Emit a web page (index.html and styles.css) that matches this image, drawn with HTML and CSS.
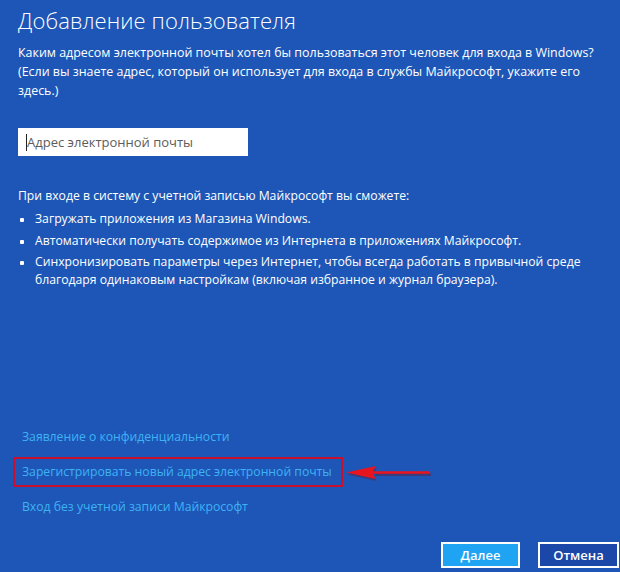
FILE: index.html
```html
<!DOCTYPE html>
<html lang="ru">
<head>
    <meta charset="UTF-8">
    <title>Добавление пользователя</title>
    <link rel="stylesheet" href="styles.css">
</head>
<body>
    <div class="dialog">
        <h1 class="title">Добавление пользователя</h1>
        <p class="intro">Каким адресом электронной почты хотел бы пользоваться этот человек для входа в Windows?<br>(Если вы знаете адрес, который он использует для входа в службы Майкрософт, укажите его<br>здесь.)</p>

        <div class="email-field">
            <span class="caret"></span>
            <span class="placeholder">Адрес электронной почты</span>
        </div>

        <p class="benefits-lead">При входе в систему с учетной записью Майкрософт вы сможете:</p>
        <ul class="benefits">
            <li>Загружать приложения из Магазина Windows.</li>
            <li>Автоматически получать содержимое из Интернета в приложениях Майкрософт.</li>
            <li>Синхронизировать параметры через Интернет, чтобы всегда работать в привычной среде благодаря одинаковым настройкам (включая избранное и журнал браузера).</li>
        </ul>

        <div class="links">
            <a class="link" href="#">Заявление о конфиденциальности</a>
            <div class="link-row">
                <a class="link marked" href="#">Зарегистрировать новый адрес электронной почты</a>
                <svg class="arrow" width="92" height="20" viewBox="0 0 92 20">
                    <path d="M30 10.5 H86" stroke="#7a0a12" stroke-width="3" opacity="0.35" transform="translate(1 2)"/>
                    <path d="M2 10.5 L32 4 L28 10.5 L32 17 Z" fill="#7a0a12" opacity="0.35" transform="translate(1 2)"/>
                    <path d="M28 10.5 H86" stroke="#e8141e" stroke-width="2.5"/>
                    <path d="M2 10.5 L32 4 L28 10.5 L32 17 Z" fill="#e8141e"/>
                </svg>
            </div>
            <a class="link" href="#">Вход без учетной записи Майкрософт</a>
        </div>

        <div class="actions">
            <button class="btn primary">Далее</button>
            <button class="btn">Отмена</button>
        </div>
    </div>
</body>
</html>
```

FILE: styles.css
```css
* {
    margin: 0;
    padding: 0;
    box-sizing: border-box;
}

body {
    background: #1d56b6;
    font-family: 'Open Sans', 'DejaVu Sans', sans-serif;
    color: #ffffff;
    width: 620px;
    height: 572px;
    overflow: hidden;
}

.dialog {
    height: 572px;
    padding: 5px 1px 4px 18px;
    display: flex;
    flex-direction: column;
}

.title {
    font-weight: 300;
    font-size: 22px;
    line-height: 30px;
    letter-spacing: 0.1px;
}

.intro {
    margin-top: 8px;
    font-size: 12.45px;
    line-height: 19px;
    white-space: nowrap;
}

.email-field {
    margin-top: 28px;
    width: 230px;
    height: 28px;
    background: #ffffff;
    display: flex;
    align-items: center;
    padding-left: 8px;
}

.caret {
    width: 1px;
    height: 17px;
    background: #222;
}

.placeholder {
    color: #5c5c5c;
    font-size: 13px;
}

.benefits-lead {
    margin-top: 31px;
    font-size: 12.2px;
    line-height: 18px;
}

.benefits {
    list-style: none;
    margin-top: 5px;
    width: 600px;
}

.benefits li {
    position: relative;
    padding-left: 17px;
    font-size: 12.2px;
    line-height: 18px;
    margin-bottom: 3.5px;
}

.benefits li::before {
    content: '';
    position: absolute;
    left: 2px;
    top: 8px;
    width: 4px;
    height: 4px;
    background: #ffffff;
    border-radius: 1px;
}

.links {
    margin-top: auto;
    display: flex;
    flex-direction: column;
    align-items: flex-start;
    gap: 11px;
}

.link {
    color: #3db2f5;
    text-decoration: none;
    font-size: 12.2px;
    line-height: 18px;
    margin-left: 4px;
    white-space: nowrap;
}

.link-row {
    display: flex;
    align-items: center;
}

.link.marked {
    margin-left: -5px;
    padding: 4px 9px 4px 7px;
    border: 2px solid #c8102e;
}

.arrow {
    margin-left: 1px;
}

.actions {
    margin-top: 26px;
    display: flex;
    justify-content: flex-end;
    gap: 18px;
}

.btn {
    height: 26px;
    width: 81px;
    border: 2px solid #ffffff;
    background: #1a47a8;
    color: #ffffff;
    font-family: 'Open Sans', 'DejaVu Sans', sans-serif;
    font-size: 13px;
    font-weight: 600;
}

.btn.primary {
    width: 79px;
    background: #1ea4f3;
}
```
